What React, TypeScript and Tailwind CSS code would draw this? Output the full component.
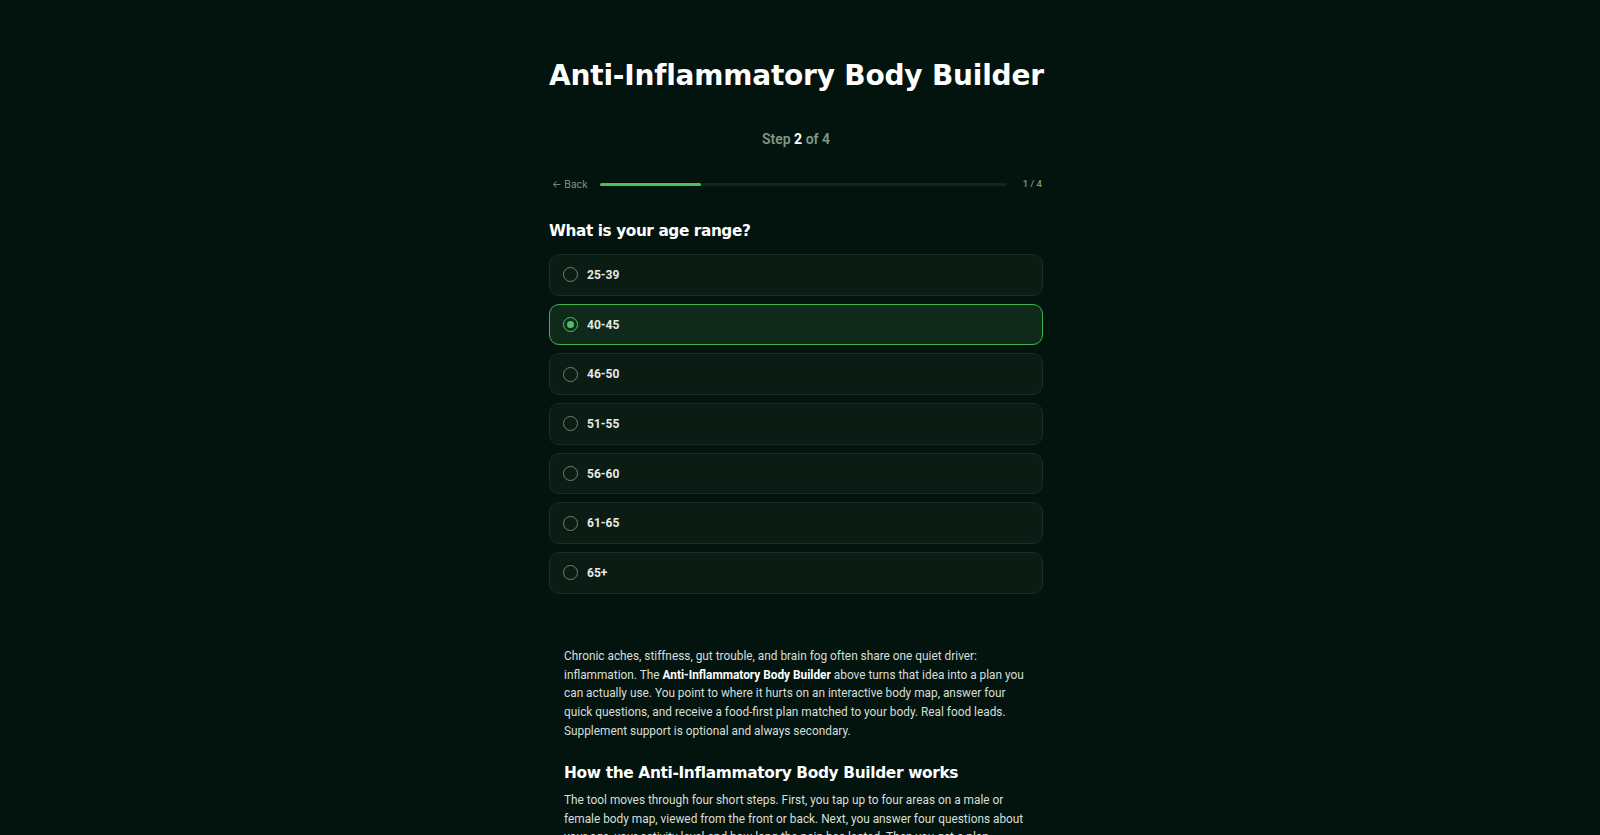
import { useState } from 'react';

const ages = ['25-39', '40-45', '46-50', '51-55', '56-60', '61-65', '65+'];

const heading = { fontFamily: '"DejaVu Sans", "Open Sans", sans-serif' };
const body = { fontFamily: 'Roboto, "Liberation Sans", sans-serif' };

export default function App() {
  const [selected, setSelected] = useState('40-45');

  return (
    <div className="min-h-screen bg-[#03140e] pr-2" style={body}>
      <div className="mx-auto w-[494px] pt-[57px]">
        <h1 className="whitespace-nowrap text-center text-[28px] leading-[38px] font-bold tracking-[-0.2px] text-white" style={heading}>
          Anti-Inflammatory Body Builder
        </h1>

        <p className="mt-[34px] text-center text-[14px] leading-5 font-semibold text-[#7f9888]">
          Step <span className="font-bold text-white">2</span> of 4
        </p>

        {/* progress */}
        <div className="mt-[27px] flex h-4 items-center">
          <button className="pl-[3px] text-[10px] text-[#7f9888]" style={{ fontFamily: 'Inter, sans-serif' }}>
            ← Back
          </button>
          <div className="ml-3 h-[3px] flex-1 rounded-full bg-[#13261d]">
            <div className="h-full w-1/4 rounded-full bg-[#4cc35a]" />
          </div>
          <span className="ml-4 pr-px text-[9.5px] font-medium text-[#7f9888]">1 / 4</span>
        </div>

        <h2 className="mt-[27px] text-[15.3px] leading-6 font-bold tracking-[-0.4px] text-white" style={heading}>
          What is your age range?
        </h2>

        <div className="mt-[11px] flex flex-col gap-2">
          {ages.map((age) => {
            const active = age === selected;
            return (
              <button
                key={age}
                onClick={() => setSelected(age)}
                className={`flex h-[41.7px] items-center gap-[10px] rounded-[10px] border pl-[13px] text-left ${
                  active ? 'border-[#42b250] bg-[#0f2a1a]' : 'border-[#1a2c23] bg-[#0b1c15]'
                }`}
              >
                <span
                  className={`flex h-[15px] w-[15px] items-center justify-center rounded-full border-[1.5px] ${
                    active ? 'border-[#4cc35a]' : 'border-[#6d7f75]'
                  }`}
                >
                  {active && <span className="h-[7px] w-[7px] rounded-full bg-[#4cc35a]" />}
                </span>
                <span className="-ml-px text-[12px] font-bold text-[#e4ebe6]">{age}</span>
              </button>
            );
          })}
        </div>

        <div className="mt-[53px] px-[15px] pb-10 text-[11.85px] leading-[18.8px] text-[#d6ded9]">
          <p>
            Chronic aches, stiffness, gut trouble, and brain fog often share one quiet driver: inflammation. The{' '}
            <strong className="font-bold text-white">Anti-Inflammatory Body Builder</strong> above turns that idea into a
            plan you can actually use. You point to where it hurts on an interactive body map, answer four quick questions,
            and receive a food-first plan matched to your body. Real food leads. Supplement support is optional and always
            secondary.
          </p>
          <h3 className="mt-[19px] text-[15.4px] leading-[26px] font-bold tracking-[-0.35px] text-white" style={heading}>
            How the Anti-Inflammatory Body Builder works
          </h3>
          <p className="mt-[5px]">
            The tool moves through four short steps. First, you tap up to four areas on a male or female body map, viewed
            from the front or back. Next, you answer four questions about your age, your activity level and how long the
            pain has lasted. Then you get a plan.
          </p>
        </div>
      </div>
    </div>
  );
}
